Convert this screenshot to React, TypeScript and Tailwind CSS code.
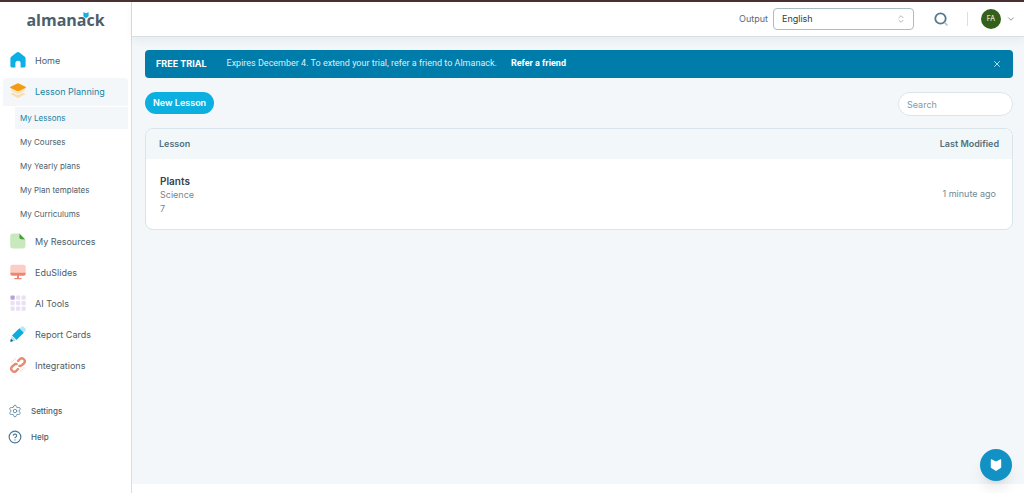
import { ChevronDown, ChevronsUpDown, CircleHelp, Settings, X } from "lucide-react";
import type { ReactNode } from "react";

const HomeIcon = () => (
  <svg viewBox="0 0 16 16" className="size-4">
    <path
      d="M6.600.6a2.200 2.200 0 0 1 2.800 0l5.400 4.200c.5.4.8 1 .8 1.600v7.400c0 1-.8 1.800-1.800 1.800H10.600v-4.200a2.600 2.600 0 0 0-5.200 0v4.200H2.200c-1 0-1.800-.8-1.800-1.800V6.400c0-.6.3-1.200.8-1.600z"
      fill="#0cb0e4"
    />
  </svg>
);

const LayersIcon = () => (
  <svg viewBox="0 0 16 16" className="size-4">
    <path d="M.3 11 3 9.800l4.400 2.100a1.500 1.500 0 0 0 1.200 0L13 9.800l2.700 1.200-7 3.800a1.500 1.500 0 0 1-1.400 0z" fill="#fbdcae" />
    <path d="M.3 7.300 2.500 6.300l4.900 2.600a1.500 1.500 0 0 0 1.200 0l4.900-2.600 2.200 1-7 3.800a1.500 1.500 0 0 1-1.400 0z" fill="#fde0b4" />
    <path d="M7.300.5a1.600 1.600 0 0 1 1.400 0l6.800 3.200c.5.300.5.900 0 1.200L8.700 8.200a1.600 1.600 0 0 1-1.400 0L.5 4.900C0 4.600 0 4 .5 3.700z" fill="#f39c12" />
  </svg>
);

const ResourcesIcon = () => (
  <svg viewBox="0 0 16 16" className="size-4">
    <path d="M3.200.5H9v3.800C9 6 10 7 11.500 7h4v5.500a3 3 0 0 1-3 3H3.200a3 3 0 0 1-3-3v-9a3 3 0 0 1 3-3z" fill="#c9e8bd" />
    <path d="M9.300.5 15.300 6.500h-4a2 2 0 0 1-2-2z" fill="#3fa535" />
  </svg>
);

const SlidesIcon = () => (
  <svg viewBox="0 0 16 16" className="size-4">
    <path d="M2.500.8h11A2.200 2.200 0 0 1 15.700 3v6.200H.3V3A2.200 2.200 0 0 1 2.500.8z" fill="#fbcdc5" />
    <path d="M.3 8.800h15.400v1a2 2 0 0 1-2 2H9v2.200h2.200a.6.600 0 0 1 0 1.200H4.800a.6.600 0 0 1 0-1.200H7v-2.200H2.300a2 2 0 0 1-2-2z" fill="#ee8673" />
  </svg>
);

const ToolsIcon = () => (
  <svg viewBox="0 0 16 16" className="size-4">
    {[0, 1, 2].map((row) =>
      [0, 1, 2].map((col) => (
        <rect
          key={`${row}-${col}`}
          x={0.5 + col * 5.5}
          y={0.5 + row * 5.5}
          width="4.2"
          height="4.2"
          rx="1"
          fill={row + col === 0 ? "#b9a0da" : "#e9e0f5"}
        />
      )),
    )}
  </svg>
);

const PencilIcon = () => (
  <svg viewBox="0 0 16 16" className="size-4">
    <path d="m9.600 2.500 1.800-1.800a1.500 1.500 0 0 1 2.100 0l1.900 1.900a1.500 1.500 0 0 1 0 2.100l-1.800 1.800z" fill="#b4e7f9" />
    <path d="m9.300 2.300 4.500 4.500-7.300 7.300L2 9.600z" fill="#0badde" />
    <path d="m1.700 10.200 4.200 4.200-4.800 1.300a.7.700 0 0 1-.8-.8z" fill="#a5e2f7" />
    <path d="m1 12.700 2.300 2.300-2.200.7a.7.700 0 0 1-.8-.8z" fill="#20648a" />
  </svg>
);

const LinkIcon = () => (
  <svg viewBox="0 0 16 16" className="size-4" fill="none" strokeLinecap="round">
    <g stroke="#e98a70" strokeWidth="2.400">
      <path d="m8 4 1.800-1.800a2.900 2.900 0 0 1 4.100 4.100L12 8.200a2.900 2.900 0 0 1-2.600.7" />
      <path d="M8 12l-1.800 1.800a2.900 2.900 0 0 1-4.100-4.100L4 7.800a2.900 2.900 0 0 1 2.600-.7" />
    </g>
    <path d="m3 3 1 1M12 12l1 1M5 1.500v1M1.500 5h1M11 13.500v1M13.500 11h1" stroke="#f9d3c8" strokeWidth="1" />
  </svg>
);

const SearchIcon = () => (
  <svg viewBox="0 0 14 14" className="size-3.5" fill="none" strokeLinecap="round">
    <circle cx="6.500" cy="6.500" r="5.200" stroke="#55788c" strokeWidth="1.800" />
    <path d="m11 11 2 2" stroke="#a9bdc8" strokeWidth="1.500" />
  </svg>
);

const BookMark = ({ className }: { className: string }) => (
  <svg viewBox="0 0 12 12" className={className} fill="currentColor">
    <path d="M.8.700Q.8 0 1.500.300L6 2.600 10.500.300q.7-.3.7.4v7.500q0 .6-.5.900L6.400 11.800q-.4.200-.8 0L1.300 9.100Q.8 8.800.8 8.200z" />
  </svg>
);

const subItems = ["My Lessons", "My Courses", "My Yearly plans", "My Plan templates", "My Curriculums"];

interface NavItemProps {
  icon: ReactNode;
  label: string;
  active?: boolean;
}

const NavItem = ({ icon, label, active }: NavItemProps) => (
  <a
    href="#"
    className={`flex h-7 items-center gap-[9px] rounded-t-sm pl-[7px] text-[9px] ${
      active ? "bg-[#f3f7f9] text-[#1683a5]" : "text-[#4c5d67]"
    }`}
  >
    <span className="pb-0.5">{icon}</span>
    {label}
  </a>
);

const Sidebar = () => (
  <aside className="w-33 shrink-0 border-r border-[#d3dfe5] bg-white">
    <div className="flex h-[45px] justify-center pt-2">
      <a href="#" className="relative h-5 font-['Open_Sans',sans-serif] text-base leading-5 font-bold text-[#4c5f6b]">
        almanack
        <BookMark className="absolute top-0.5 right-4 size-1.5 text-[#12b0e0]" />
      </a>
    </div>
    <nav className="flex flex-col gap-[3px] px-[3px]">
      <NavItem icon={<HomeIcon />} label="Home" />
      <div className="flex flex-col gap-px">
        <NavItem icon={<LayersIcon />} label="Lesson Planning" active />
        <ul className="flex flex-col gap-0.5 pl-3">
          {subItems.map((item, i) => (
            <li key={item}>
              <a
                href="#"
                className={`flex h-[22px] items-center pl-[5px] text-[8px] ${
                  i === 0 ? "bg-[#f3f7f9] text-[#1683a5]" : "text-[#4c5d67]"
                }`}
              >
                {item}
              </a>
            </li>
          ))}
        </ul>
      </div>
      <NavItem icon={<ResourcesIcon />} label="My Resources" />
      <NavItem icon={<SlidesIcon />} label="EduSlides" />
      <NavItem icon={<ToolsIcon />} label="AI Tools" />
      <NavItem icon={<PencilIcon />} label="Report Cards" />
      <NavItem icon={<LinkIcon />} label="Integrations" />
    </nav>
    <nav className="mt-[18px] flex flex-col px-2 text-[8px] font-medium text-[#4c5d67]">
      <a href="#" className="flex h-[26px] items-center gap-[9px]">
        <Settings className="size-3.5 text-[#5b87a3]" strokeWidth={1.5} />
        Settings
      </a>
      <a href="#" className="flex h-[26px] items-center gap-[9px]">
        <CircleHelp className="size-3.5 text-[#4b7896]" strokeWidth={2} />
        Help
      </a>
    </nav>
  </aside>
);

const Header = () => (
  <header className="relative flex h-[35px] items-center justify-end border-b border-[#d8dfe4] bg-white pr-2 shadow-[0_4px_8px_rgba(50,60,70,0.06)]">
    <label htmlFor="output" className="mr-[5px] text-[9px] text-[#5a6c77]">
      Output
    </label>
    <div className="relative flex">
      <select
        id="output"
        className="h-[22px] w-[141px] appearance-none rounded-sm border border-[#a9bdc8] bg-white px-2 text-[9px] text-[#2f3d46]"
      >
        <option>English</option>
      </select>
      <ChevronsUpDown className="pointer-events-none absolute top-1.5 right-2 size-2.5 text-[#7d8f9a]" strokeWidth={1.5} />
    </div>
    <button type="button" aria-label="Search" className="ml-5">
      <SearchIcon />
    </button>
    <span className="mr-[13px] ml-[19px] h-3.5 w-px bg-[#d8e0e5]" />
    <button type="button" aria-label="Account" className="flex items-center gap-[5px]">
      <span className="flex size-5 items-center justify-center rounded-full bg-[#33611b] text-[7px] text-white">FA</span>
      <ChevronDown className="size-2.5 text-[#6f8592]" />
    </button>
  </header>
);

const TrialBanner = () => (
  <div className="flex h-7 items-center rounded-sm bg-[#007cab] px-[11px] font-['Roboto',sans-serif] text-[9px] text-[#d9f0f8]">
    <strong className="mr-5 font-['Inter',sans-serif] font-bold text-white">FREE TRIAL</strong>
    <span className="mr-3.5">Expires December 4. To extend your trial, refer a friend to Almanack.</span>
    <a href="#" className="font-bold text-white">
      Refer a friend
    </a>
    <button type="button" aria-label="Dismiss" className="ml-auto">
      <X className="size-2.5" />
    </button>
  </div>
);

const LessonTable = () => (
  <div className="mt-3 overflow-hidden rounded-lg border border-[#d9e5ea] bg-white">
    <table className="w-full text-[9px]">
      <thead className="bg-[#f2f7f9] text-[#517080]">
        <tr className="h-[30px]">
          <th className="pl-[13px] text-left font-semibold">Lesson</th>
          <th className="pr-[13px] text-right font-semibold">Last Modified</th>
        </tr>
      </thead>
      <tbody>
        <tr className="h-[70px] text-[#738792]">
          <td className="pt-px pl-3.5">
            <p className="text-[10px] leading-[14px] font-semibold text-[#35444d]">Plants</p>
            <p className="leading-[14px]">Science</p>
            <p className="leading-[14px]">7</p>
          </td>
          <td className="pr-4 text-right">1 minute ago</td>
        </tr>
      </tbody>
    </table>
  </div>
);

const App = () => (
  <div className="flex min-h-screen flex-col border-t-2 border-[#4a3032] bg-white font-['Inter',sans-serif]">
    <div className="flex flex-1">
      <Sidebar />
      <div className="flex min-w-0 flex-1 flex-col pb-[9px]">
        <Header />
        <main className="flex-1 bg-[#f3f7fa] pt-[13px] pr-[11px] pl-[13px]">
          <TrialBanner />
          <div className="mt-3.5 flex items-start justify-between">
            <button type="button" className="h-[22px] rounded-full bg-[#0cb0e0] px-2 text-[9px] font-semibold text-white">
              New Lesson
            </button>
            <input
              type="search"
              aria-label="Search lessons"
              placeholder="Search"
              className="h-6 w-[115px] rounded-full border border-[#dbe6eb] bg-white px-2 text-[9px] placeholder:text-[#8599a4]"
            />
          </div>
          <LessonTable />
        </main>
      </div>
    </div>
    <button
      type="button"
      aria-label="Open chat"
      className="fixed right-3 bottom-3 flex size-8 items-center justify-center rounded-full bg-[#1191c4] text-white shadow-lg"
    >
      <BookMark className="size-3" />
    </button>
  </div>
);

export default App;
